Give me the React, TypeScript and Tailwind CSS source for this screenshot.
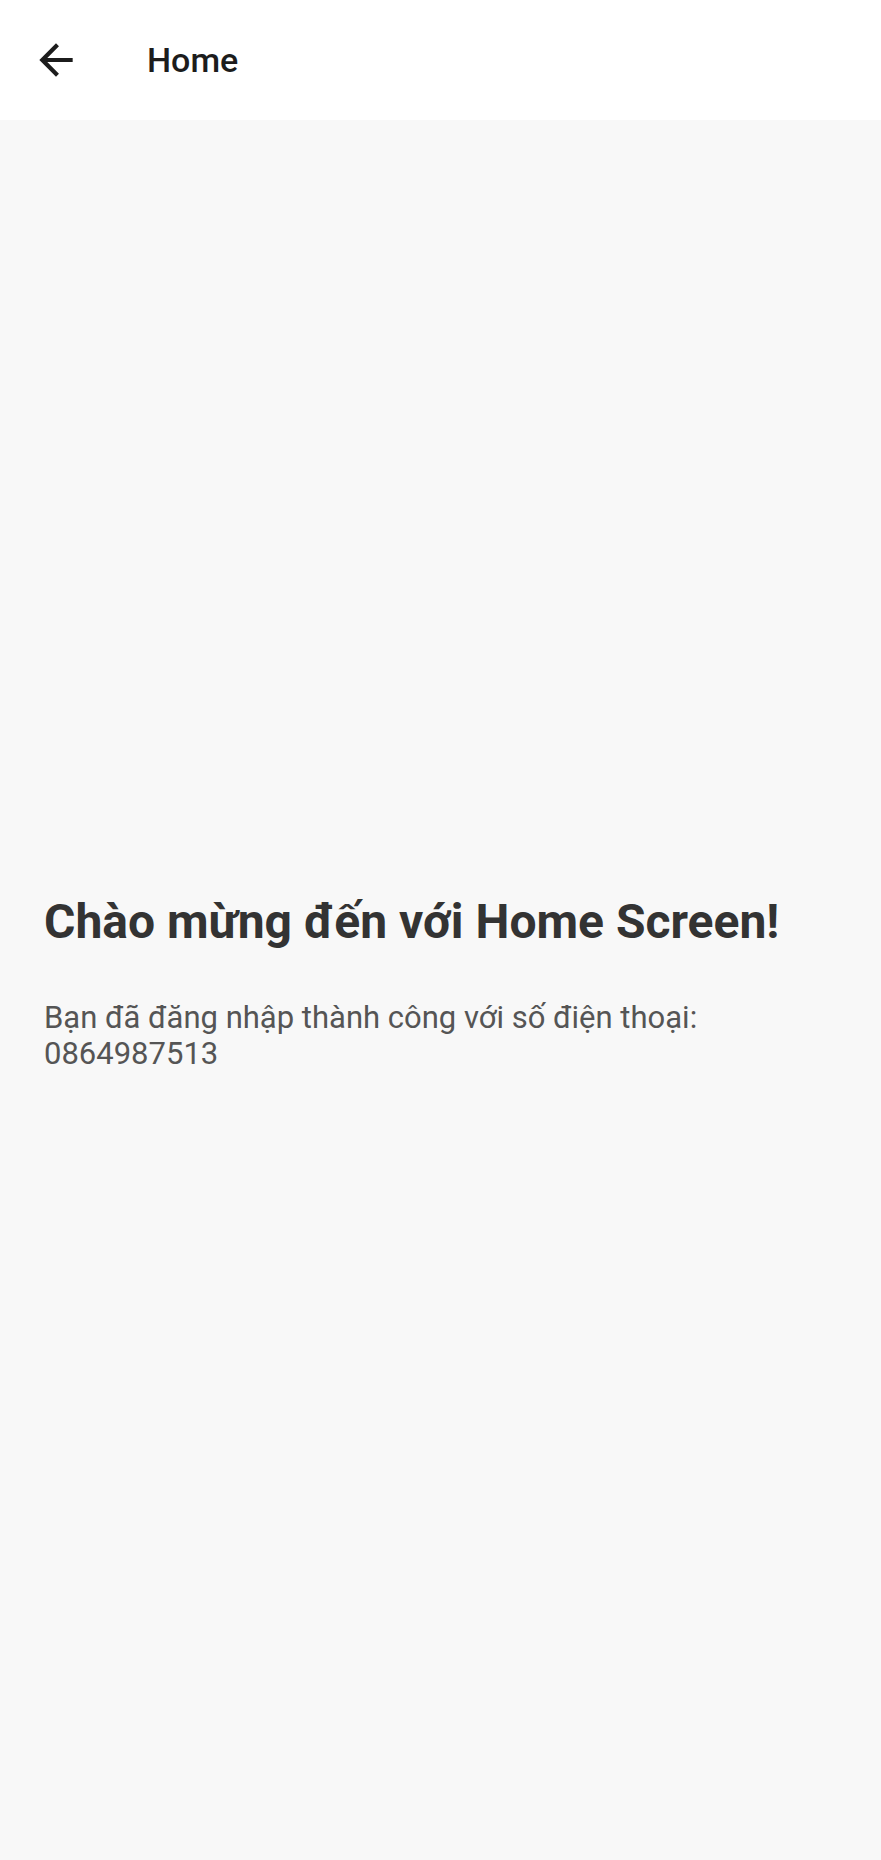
export default function App() {
  return (
    <div className="min-h-[1860px] flex flex-col bg-[#f8f8f8] font-['Roboto',sans-serif]">
      <header className="h-[120px] bg-white flex items-center shrink-0">
        <button className="ml-[31px] w-[50px] h-[50px] flex items-center justify-center text-[#1c1c1c]">
          <svg viewBox="0 0 24 24" className="w-[50px] h-[50px]" fill="currentColor">
            <path d="M20 11H7.83l5.59-5.59L12 4l-8 8 8 8 1.41-1.41L7.83 13H20v-2z" />
          </svg>
        </button>
        <h1 className="ml-[66px] text-[34px] font-medium text-[#1c1c1c] leading-none">Home</h1>
      </header>
      <main className="flex-1 flex flex-col justify-center px-[44px] pb-[16px]">
        <h2 className="text-[48px] font-bold text-[#333333] leading-tight">
          Chào mừng đến với Home Screen!
        </h2>
        <p className="mt-[48px] text-[31px] leading-[36px] text-[#555555]">
          Bạn đã đăng nhập thành công với số điện thoại: 0864987513
        </p>
      </main>
    </div>
  )
}
